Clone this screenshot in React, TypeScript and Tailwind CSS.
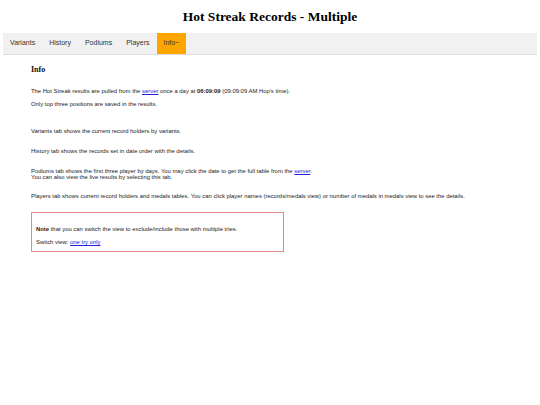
import React from "react";

const tabs = ["Variants", "History", "Podiums", "Players"];

export default function App() {
  return (
    <div className="w-[540px] h-[405px] bg-white text-black overflow-hidden" style={{ fontFamily: '"Liberation Sans", Arial, sans-serif' }}>
      <div className="pt-[9px] h-[33px]">
        <h1 className="text-center text-[13.5px] leading-[16px] font-bold" style={{ fontFamily: '"Liberation Serif", "Times New Roman", serif' }}>
          Hot Streak Records - Multiple
        </h1>
      </div>
      <div className="mx-[3px] h-[22px] bg-[#f1f1f1] border-b border-[#dddddd] flex items-stretch">
        {tabs.map((t) => (
          <div key={t} className="px-[7px] flex items-center text-[7px] text-[#333]">
            {t}
          </div>
        ))}
        <div className="px-[7px] flex items-center text-[7px] bg-[#ffa500] text-[#333]">Info~</div>
      </div>
      <div className="pl-[31px] text-[5.9px] leading-[7px] text-[#222]">
        <h3 className="mt-[10px] text-[8px] leading-[10px] font-bold text-[#111]" style={{ fontFamily: '"Liberation Serif", "Times New Roman", serif' }}>
          Info
        </h3>
        <p className="mt-[12.5px]">
          The Hot Streak results are pulled from the <a className="text-[#2222dd] underline">server</a> once a day at <b>06:09:09</b> (09:09:09 AM Hop's time).
        </p>
        <p className="mt-[6px]">Only top three positions are saved in the results.</p>
        <p className="mt-[20px]">Variants tab shows the current record holders by variants.</p>
        <p className="mt-[13px]">History tab shows the records set in date order with the details.</p>
        <p className="mt-[13px] leading-[6px]">
          Podiums tab shows the first three player by days. You may click the date to get the full table from the <a className="text-[#2222dd] underline">server</a>.
          <br />
          You can also view the live results by selecting this tab.
        </p>
        <p className="mt-[13px]">
          Players tab shows current record holders and medals tables. You can click player names (records/medals view) or number of medals in medals view to see the details.
        </p>
        <div className="mt-[12.5px] w-[253px] h-[40px] border border-[#e08a8a] pl-[4px] pt-[13px]">
          <p>
            <b>Note</b> that you can switch the view to exclude/include those with multiple tries.
          </p>
          <p className="mt-[6px]">
            Switch view: <a className="text-[#2222dd] underline">one try only</a>
          </p>
        </div>
      </div>
    </div>
  );
}
